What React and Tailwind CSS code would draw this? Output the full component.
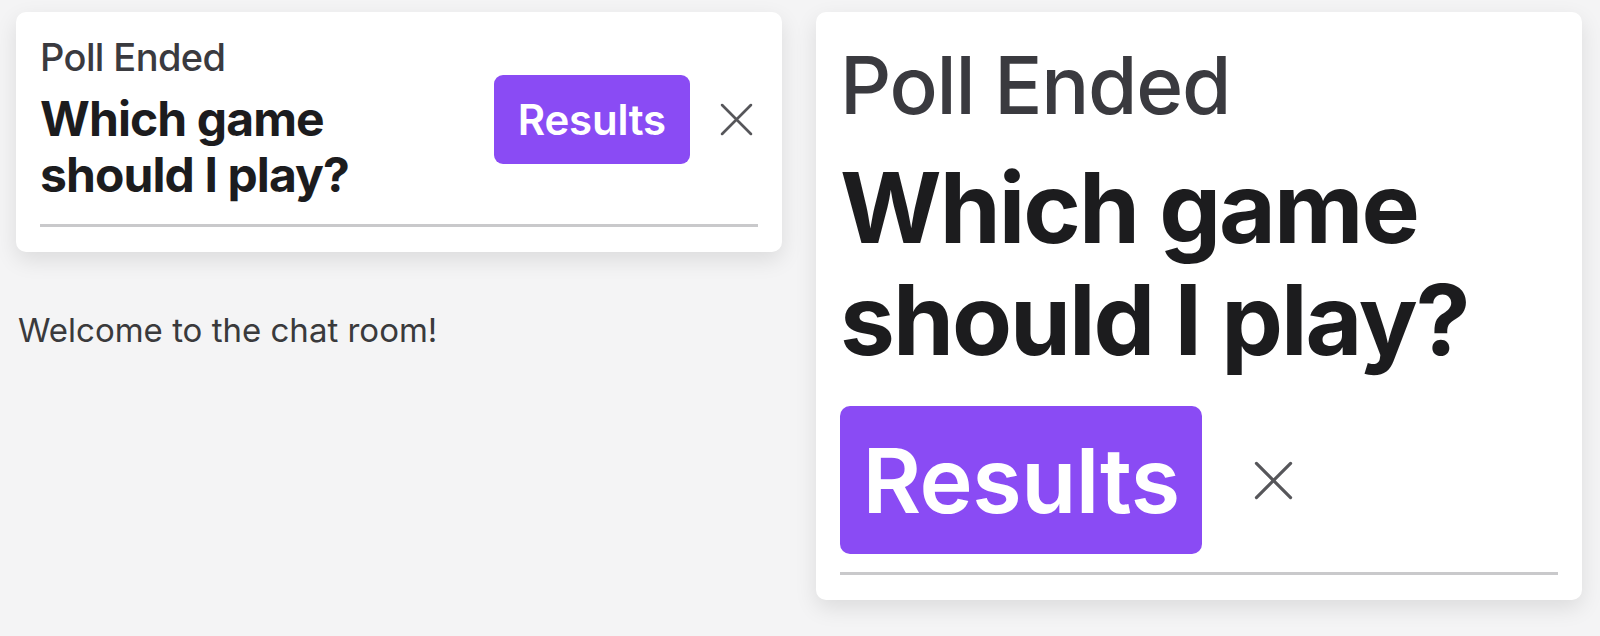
import React from 'react';

const font = { fontFamily: 'Inter, "Noto Sans", sans-serif' };

function CloseIcon({ size, className }) {
  return (
    <svg width={size} height={size} viewBox="0 0 32 32" className={className} fill="none">
      <path d="M2 2 L30 30 M30 2 L2 30" stroke="#56565a" strokeWidth="2.6" strokeLinecap="round" />
    </svg>
  );
}

// Compact poll banner (default text size)
function PollCardSmall() {
  return (
    <div className="bg-white rounded-[10px] shadow-[0_8px_22px_rgba(0,0,0,0.10)] px-6 pt-[22px] pb-[25px]">
      <div className="flex items-center">
        <div className="flex-1">
          <div className="text-[38px] leading-[46px] font-medium text-[#3a3a3f] tracking-[-0.6px]">Poll Ended</div>
          <div className="mt-[11px] text-[48px] leading-[56px] font-bold text-[#1c1c1e] tracking-[-0.9px]">
            Which game
            <br />
            should I play?
          </div>
        </div>
        <button className="h-[89px] px-6 rounded-[9px] bg-[#8a4bf4] text-white text-[42px] font-semibold tracking-[-0.2px] mt-[2px]">
          Results
        </button>
        <CloseIcon size={33} className="ml-[30px] mr-[5px] mt-[2px]" />
      </div>
      <div className="mt-[21px] h-[3px] bg-[#c9c9cb]" />
    </div>
  );
}

// Same banner at an accessibility text size
function PollCardLarge() {
  return (
    <div className="bg-white rounded-[10px] shadow-[0_8px_22px_rgba(0,0,0,0.10)] px-6 pt-[25px] pb-[25px]">
      <div className="text-[80px] leading-[96px] font-medium text-[#3a3a3f] tracking-[-1.3px]">Poll Ended</div>
      <div className="mt-[19px] text-[98px] leading-[112px] font-bold text-[#1c1c1e] tracking-[-2px]">
        Which game
        <br />
        should I play?
      </div>
      <div className="mt-[30px] flex items-center">
        <button className="h-[148px] w-[362px] rounded-[10px] bg-[#8a4bf4] text-white text-[90px] font-semibold tracking-[-0.5px]">
          Results
        </button>
        <CloseIcon size={39} className="ml-[52px]" />
      </div>
      <div className="mt-[18px] h-[3px] bg-[#c9c9cb]" />
    </div>
  );
}

export default function App() {
  return (
    <div style={font} className="w-full h-[636px] flex bg-[#f4f4f5] overflow-hidden">
      <div className="w-1/2 pl-4 pr-[18px] pt-3">
        <PollCardSmall />
        <p className="mt-[58px] pl-[2px] text-[33px] leading-[40px] text-[#3a3a3c]">Welcome to the chat room!</p>
      </div>
      <div className="w-1/2 pl-4 pr-[18px] pt-3">
        <PollCardLarge />
      </div>
    </div>
  );
}
